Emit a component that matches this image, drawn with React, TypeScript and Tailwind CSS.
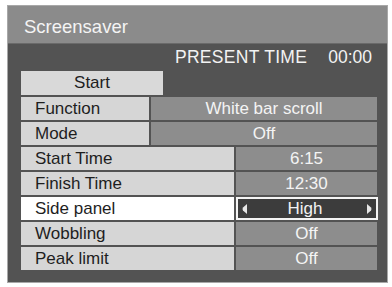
import React from 'react';

type Row = {
  label: string;
  value: string;
  wide?: boolean;
  active?: boolean;
};

const rows: Row[] = [
  { label: 'Function', value: 'White bar scroll', wide: true },
  { label: 'Mode', value: 'Off', wide: true },
  { label: 'Start Time', value: '6:15' },
  { label: 'Finish Time', value: '12:30' },
  { label: 'Side panel', value: 'High', active: true },
  { label: 'Wobbling', value: 'Off' },
  { label: 'Peak limit', value: 'Off' },
];

function Arrow({ dir }: { dir: 'left' | 'right' }) {
  return (
    <svg width="5" height="10" viewBox="0 0 5 10" className="shrink-0">
      {dir === 'left' ? (
        <path d="M5 0 L5 10 L1 6.5 Q0 5 1 3.5 Z" fill="#e6e6e6" />
      ) : (
        <path d="M0 0 L0 10 L4 6.5 Q5 5 4 3.5 Z" fill="#e6e6e6" />
      )}
    </svg>
  );
}

export default function App() {
  return (
    <div
      className="w-[392px] h-[287px] bg-white pt-[5px] pl-[7px]"
      style={{ fontFamily: '"Liberation Sans", Arial, sans-serif' }}
    >
      <div className="w-[381px] h-[278px] border border-[#a8a8a8] bg-[#535353] flex flex-col">
        {/* title bar */}
        <div className="h-[38px] bg-[#8b8b8b] flex items-center pl-[16px] pt-[4px] text-[18.5px] text-[#f4f4f4] border-b border-[#6a6a6a]">
          Screensaver
        </div>

        {/* present time */}
        <div className="h-[27px] flex items-center justify-end pr-[15px] text-[17.5px] text-[#f2f2f2]">
          <span className="tracking-[0.3px]">PRESENT TIME</span>
          <span className="ml-[21px]">00:00</span>
        </div>

        {/* start button */}
        <div className="ml-[13px] w-[142px] h-[24px] bg-[#d9d9d9] flex items-center justify-center text-[17px] text-[#1e1e1e]">
          Start
        </div>

        {/* settings rows */}
        <div className="flex flex-col gap-[2px] mt-[2px] ml-[13px] w-[356px]">
          {rows.map((row) => (
            <div key={row.label} className="flex h-[23px] gap-[2px]">
              <div
                className={`${row.wide ? 'w-[128px]' : 'w-[213px]'} ${
                  row.active ? 'bg-white' : 'bg-[#d6d6d6]'
                } flex items-center pl-[14px] text-[17px] text-[#1e1e1e]`}
              >
                {row.label}
              </div>
              {row.active ? (
                <div className="flex-1 -mr-[1px] border-2 border-[#f4f4f4] bg-[#3c3c3c] flex items-center justify-between px-[4px] text-[17px] text-[#f2f2f2]">
                  <Arrow dir="left" />
                  <span className="pr-[4px]">{row.value}</span>
                  <Arrow dir="right" />
                </div>
              ) : (
                <div className="flex-1 bg-[#8d8d8d] flex items-center justify-center text-[17px] text-[#f4f4f4]">
                  {row.value}
                </div>
              )}
            </div>
          ))}
        </div>
      </div>
    </div>
  );
}
